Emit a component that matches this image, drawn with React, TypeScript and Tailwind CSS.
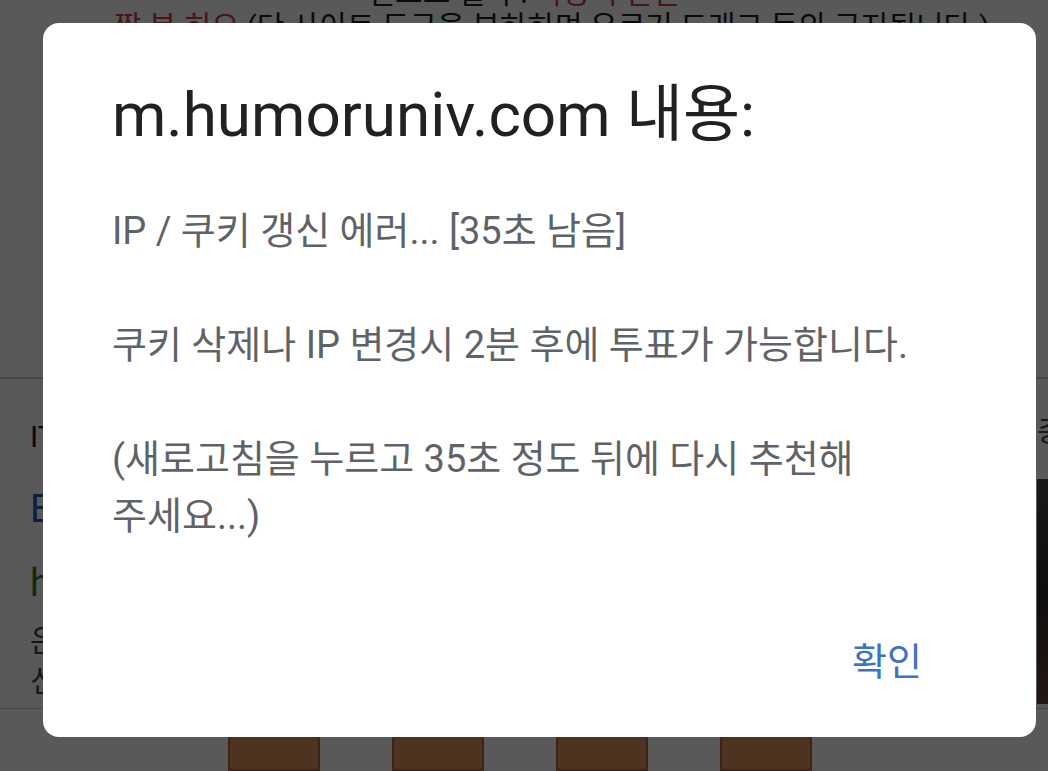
import React from 'react'

const kr = "font-['Roboto','Noto_Sans_CJK_KR',sans-serif] [font-feature-settings:'palt']"

function PageBehind() {
  return (
    <div className="flex flex-col w-[1048px] h-[771px] bg-white">
      <div className="-mt-[24px] flex flex-col items-center text-[30px] leading-[34px] text-[#222]">
        <p>
          신고느 결과 : <span className="text-[#c9404c]">극장시 판단</span>
        </p>
        <p className="pl-[40px]">
          <span className="text-[#c9404c]">· 짧 분 히오</span> (단 사이트 도구을 부하하며 우르기 드래그 등의 금지됩니다.)
        </p>
      </div>

      <div className="mt-[333px] border-t-2 border-[#d8bda4] grid grid-cols-[1037px_220px] h-[350px] border-b border-b-[#cfc6bd]">
        <div className="flex flex-col pl-[30px] pt-[38px]">
          <p className="text-[30px] leading-[40px] text-[#1b1b1b]">IT 유머 게시판</p>
          <p className="mt-[28px] text-[38px] leading-[48px] text-[#2a5bb8]">ERROR 추천 투표 안내</p>
          <p className="mt-[26px] text-[38px] leading-[48px] text-[#2f7a2a]">https://m.humoruniv.com</p>
          <p className="mt-[14px] text-[30px] leading-[40px] text-[#444]">은 추천 투표 시스템 안내 페이지입니다</p>
          <p className="text-[30px] leading-[40px] text-[#444]">신고 결과 및 판단 기준을 확인하세요</p>
        </div>
        <div className="flex flex-col pt-[32px]">
          <p className="text-[30px] leading-[40px] text-[#444]">총</p>
          <div className="mt-[28px] h-[225px] bg-gradient-to-b from-[#4a4a4a] via-[#2a2a2a] to-[#6a4030]" />
        </div>
      </div>

      <div className="flex gap-[72px] pl-[228px] pt-[22px]">
        <div className="w-[92px] h-[40px] rounded-t-[9px] border-2 border-[#b8623f] bg-[#e2925f]" />
        <div className="w-[92px] h-[40px] rounded-t-[9px] border-2 border-[#b8623f] bg-[#e2925f]" />
        <div className="w-[92px] h-[40px] rounded-t-[9px] border-2 border-[#b8623f] bg-[#e2925f]" />
        <div className="w-[92px] h-[40px] rounded-t-[9px] border-2 border-[#b8623f] bg-[#e2925f]" />
      </div>
    </div>
  )
}

export default function App() {
  return (
    <div className={`relative w-[1048px] h-[771px] overflow-hidden ${kr}`}>
      <PageBehind />
      <div className="absolute inset-0 bg-black/65" />

      <div className="absolute left-[43px] top-[23px] w-[993px] h-[714px] rounded-[16px] bg-white flex flex-col px-[69px] pt-[56px] pb-[46px]">
        <h1 className="text-[62px] leading-[72px] text-[#202124] font-normal">m.humoruniv.com 내용:</h1>

        <p className="mt-[52px] text-[38px] leading-[57px] text-[#5f6368] whitespace-pre-line">
          {'IP / 쿠키 갱신 에러... [35초 남음]\n\n쿠키 삭제나 IP 변경시 2분 후에 투표가 가능합니다.\n\n(새로고침을 누르고 35초 정도 뒤에 다시 추천해\n주세요...)'}
        </p>

        <div className="mt-auto flex justify-end">
          <button className="mr-[45px] text-[38px] leading-[57px] text-[#3f72c4]">확인</button>
        </div>
      </div>
    </div>
  )
}
